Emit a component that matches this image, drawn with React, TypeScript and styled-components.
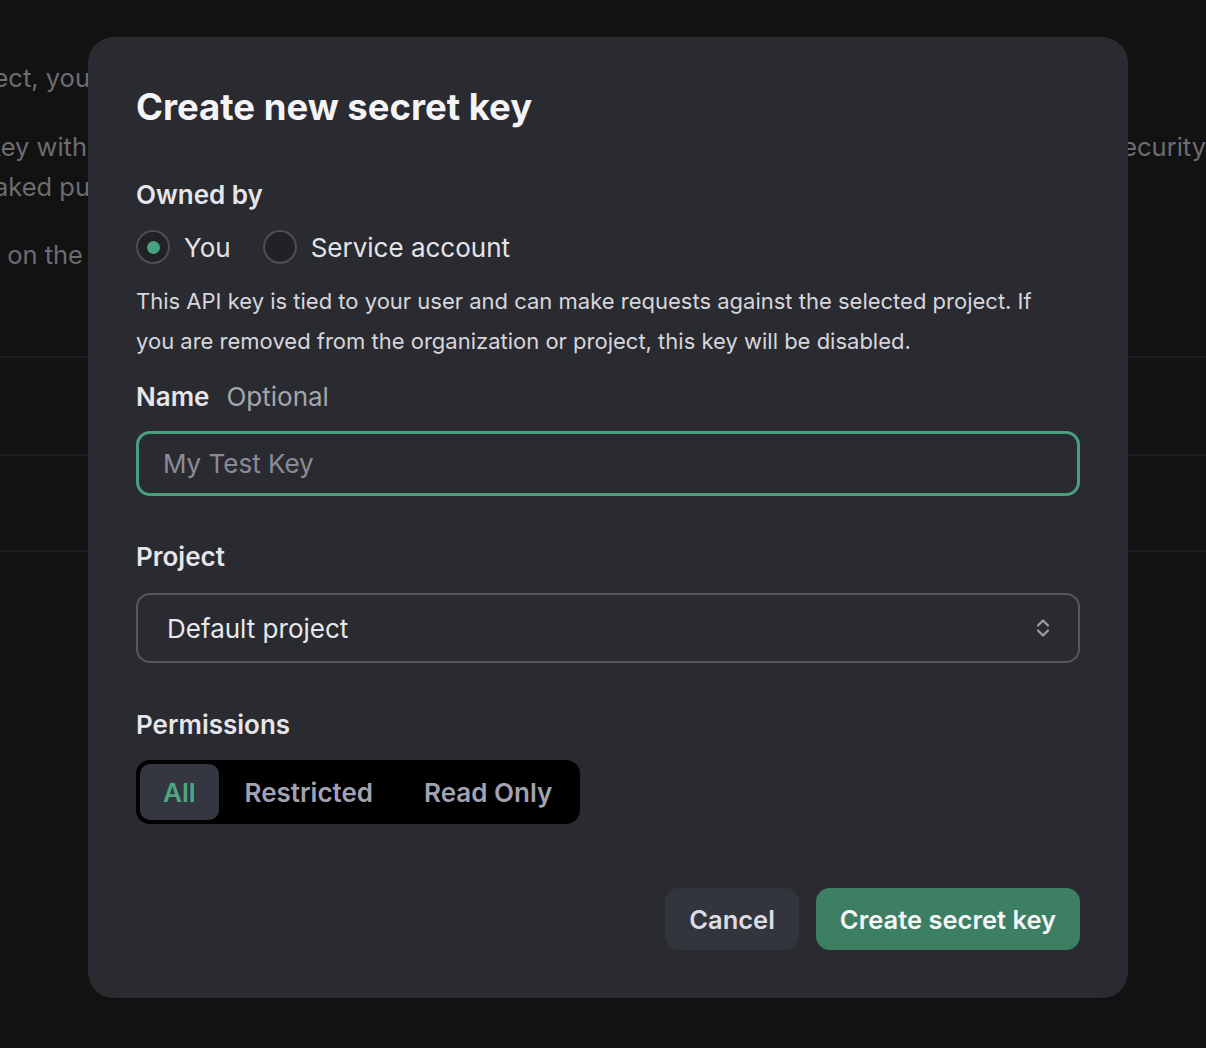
import React, { useState } from "react";
import styled, { createGlobalStyle } from "styled-components";

const GlobalStyle = createGlobalStyle`
  html, body {
    margin: 0;
    padding: 0;
    background: #121212;
    font-family: Inter, "Noto Sans", "Liberation Sans", sans-serif;
    -webkit-font-smoothing: antialiased;
  }
  * { box-sizing: border-box; }
`;

const Page = styled.div`
  position: relative;
  width: 1206px;
  height: 1048px;
  overflow: hidden;
  background: #121212;
`;

const Backdrop = styled.div`
  display: flex;
  flex-direction: column;
  padding-top: 58px;
  color: #6c6c72;
  font-size: 25.5px;
  line-height: 40px;
`;

const BgRow = styled.div<{ $mt?: number }>`
  display: flex;
  justify-content: space-between;
  margin-top: ${(p) => p.$mt ?? 0}px;
  height: 40px;
`;

const BgLeft = styled.div<{ $pad?: number }>`
  width: 90px;
  display: flex;
  justify-content: flex-end;
  overflow: hidden;
  white-space: nowrap;
  padding-right: ${(p) => p.$pad ?? 0}px;
`;

const BgRight = styled.div`
  width: 78px;
  display: flex;
  justify-content: flex-end;
  overflow: hidden;
  white-space: nowrap;
`;

const Divider = styled.div<{ $mt: number }>`
  height: 2px;
  background: #1d1d20;
  margin-top: ${(p) => p.$mt}px;
`;

const Overlay = styled.div`
  position: absolute;
  inset: 0;
  padding: 37px 0 0 88px;
`;

const Modal = styled.div`
  width: 1040px;
  background: #2a2b31;
  border-radius: 26px;
  padding: 48px;
  display: flex;
  flex-direction: column;
  color: #ececf1;
`;

const Title = styled.h1`
  margin: 0;
  font-size: 36.5px;
  line-height: 44px;
  font-weight: 700;
  color: #f4f4f6;
`;

const Label = styled.div<{ $mt: number }>`
  margin-top: ${(p) => p.$mt}px;
  font-size: 26px;
  line-height: 32px;
  font-weight: 600;
  color: #e6e6ea;
  display: flex;
  gap: 17px;
`;

const Hint = styled.span`
  font-weight: 400;
  color: #a5a5ad;
`;

const RadioRow = styled.div`
  margin-top: 19px;
  display: flex;
  align-items: center;
  gap: 32px;
  height: 34px;
`;

const RadioOption = styled.label`
  display: flex;
  align-items: center;
  gap: 14px;
  font-size: 26px;
  color: #e4e4e8;
  cursor: pointer;
`;

const RadioCircle = styled.span<{ $on: boolean }>`
  width: 34px;
  height: 34px;
  border-radius: 50%;
  border: 2px solid #4c4d57;
  background: #212226;
  display: flex;
  align-items: center;
  justify-content: center;
  &::after {
    content: "";
    width: 13px;
    height: 13px;
    border-radius: 50%;
    background: #48a27f;
    display: ${(p) => (p.$on ? "block" : "none")};
  }
`;

const Description = styled.p`
  margin: 17px 0 0;
  max-width: 915px;
  font-size: 22px;
  line-height: 40px;
  color: #d6d6dc;
`;

const TextInput = styled.input`
  margin-top: 18px;
  width: 944px;
  height: 65px;
  border: 3px solid #48a07f;
  border-radius: 14px;
  background: transparent;
  padding: 0 24px;
  font-family: inherit;
  font-size: 26px;
  color: #ececf1;
  outline: none;
  &::placeholder {
    color: #8b8b97;
  }
`;

const Select = styled.div`
  margin-top: 20px;
  width: 944px;
  height: 70px;
  border: 2px solid #55565f;
  border-radius: 14px;
  display: flex;
  align-items: center;
  justify-content: space-between;
  padding: 0 28px 0 29px;
  font-size: 26px;
  color: #e8e8ec;
`;

const Segmented = styled.div`
  margin-top: 19px;
  align-self: flex-start;
  display: flex;
  align-items: center;
  gap: 1px;
  background: #000;
  border-radius: 14px;
  padding: 4px 3px 4px 4px;
  height: 64px;
`;

const Segment = styled.button<{ $active: boolean }>`
  height: 56px;
  border: none;
  border-radius: 10px;
  padding: 0 ${(p) => (p.$active ? "23px" : "25px")};
  font-family: inherit;
  font-size: 26px;
  font-weight: 600;
  background: ${(p) => (p.$active ? "#343741" : "transparent")};
  color: ${(p) => (p.$active ? "#4ea683" : "#a2a2b0")};
  cursor: pointer;
`;

const Footer = styled.div`
  margin-top: 64px;
  display: flex;
  justify-content: flex-end;
  gap: 17px;
`;

const Button = styled.button<{ $primary?: boolean }>`
  height: 62px;
  border: none;
  border-radius: 14px;
  padding: 0 24px;
  font-family: inherit;
  font-size: 25.5px;
  font-weight: 600;
  background: ${(p) => (p.$primary ? "#3c7f63" : "#33353d")};
  color: ${(p) => (p.$primary ? "#f6f6f8" : "#dcdce4")};
  cursor: pointer;
`;

const ChevronIcon = () => (
  <svg width="14" height="20" viewBox="0 0 14 20" fill="none">
    <path
      d="M2 7.5 7 2.5 12 7.5M2 12.5 7 17.5 12 12.5"
      stroke="#9d9dab"
      strokeWidth="2.2"
      strokeLinecap="round"
      strokeLinejoin="round"
    />
  </svg>
);

export default function App(): JSX.Element {
  const [owner, setOwner] = useState<"you" | "service">("you");
  const [perm, setPerm] = useState("All");

  return (
    <>
      <GlobalStyle />
      <Page>
        <Backdrop>
          <BgRow>
            <BgLeft>project, you</BgLeft>
          </BgRow>
          <BgRow $mt={29}>
            <BgLeft $pad={3}>your key with</BgLeft>
            <BgRight>security</BgRight>
          </BgRow>
          <BgRow>
            <BgLeft>a leaked pu</BgLeft>
          </BgRow>
          <BgRow $mt={28}>
            <BgLeft $pad={7}>usage on the</BgLeft>
          </BgRow>
          <Divider $mt={81} />
          <Divider $mt={96} />
          <Divider $mt={94} />
        </Backdrop>

        <Overlay>
          <Modal>
            <Title>Create new secret key</Title>

            <Label $mt={50}>Owned by</Label>
            <RadioRow>
              <RadioOption onClick={() => setOwner("you")}>
                <RadioCircle $on={owner === "you"} />
                You
              </RadioOption>
              <RadioOption onClick={() => setOwner("service")}>
                <RadioCircle $on={owner === "service"} />
                Service account
              </RadioOption>
            </RadioRow>
            <Description>
              This API key is tied to your user and can make requests against the selected project. If
              you are removed from the organization or project, this key will be disabled.
            </Description>

            <Label $mt={20}>
              Name <Hint>Optional</Hint>
            </Label>
            <TextInput placeholder="My Test Key" />

            <Label $mt={45}>Project</Label>
            <Select>
              Default project
              <ChevronIcon />
            </Select>

            <Label $mt={46}>Permissions</Label>
            <Segmented>
              {["All", "Restricted", "Read Only"].map((p) => (
                <Segment key={p} $active={perm === p} onClick={() => setPerm(p)}>
                  {p}
                </Segment>
              ))}
            </Segmented>

            <Footer>
              <Button>Cancel</Button>
              <Button $primary>Create secret key</Button>
            </Footer>
          </Modal>
        </Overlay>
      </Page>
    </>
  );
}
